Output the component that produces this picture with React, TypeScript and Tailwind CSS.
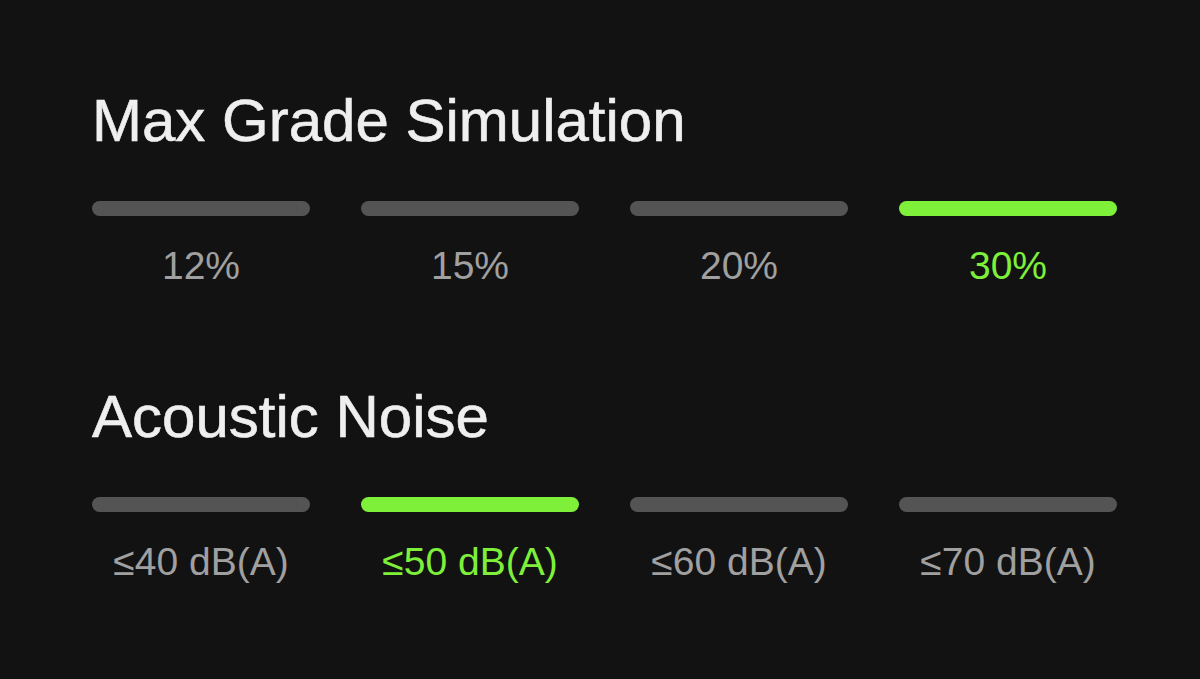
const grades = [
  { label: "12%", active: false },
  { label: "15%", active: false },
  { label: "20%", active: false },
  { label: "30%", active: true },
];

const noise = [
  { label: "≤40 dB(A)", active: false },
  { label: "≤50 dB(A)", active: true },
  { label: "≤60 dB(A)", active: false },
  { label: "≤70 dB(A)", active: false },
];

type Option = { label: string; active: boolean };

function Section({ title, options }: { title: string; options: Option[] }) {
  return (
    <section>
      <h2 className="text-[60px] leading-none text-[#efefef] [-webkit-text-stroke:0.6px_#efefef]">
        {title}
      </h2>
      <div className="mt-[50px] grid w-[1025px] grid-cols-4 gap-x-[51px]">
        {options.map((o) => (
          <div key={o.label} className="flex flex-col items-center">
            <div
              className={
                o.active
                  ? "h-[15px] w-full rounded-full bg-[#7ef03a]"
                  : "h-[15px] w-full rounded-full bg-[#545454]"
              }
            />
            <span
              className={
                o.active
                  ? "mt-[30px] text-[39px] leading-none text-[#7ef03a]"
                  : "mt-[30px] text-[39px] leading-none text-[#a0a0a0]"
              }
            >
              {o.label}
            </span>
          </div>
        ))}
      </div>
    </section>
  );
}

export default function App() {
  return (
    <div
      className="h-[679px] w-[1200px] overflow-hidden bg-[#121212] px-[92px] pt-[91px]"
      style={{ fontFamily: '"Liberation Sans", Arial, sans-serif' }}
    >
      <Section title="Max Grade Simulation" options={grades} />
      <div className="mt-[102px]">
        <Section title="Acoustic Noise" options={noise} />
      </div>
    </div>
  );
}
